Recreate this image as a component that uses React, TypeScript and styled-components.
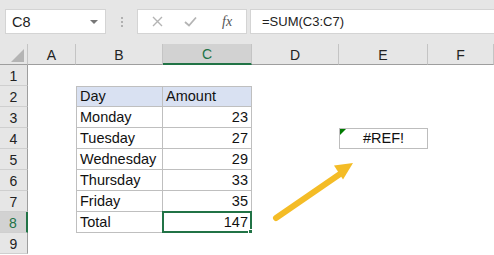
import styled, { createGlobalStyle } from "styled-components";

const GlobalStyle = createGlobalStyle`
  body {
    margin: 0;
    background: #fff;
    font-family: "Liberation Sans", Arial, sans-serif;
  }
`;

const Page = styled.div`
  position: relative;
  width: 494px;
  height: 255px;
  overflow: hidden;
  background: #fff;
`;

const FormulaBar = styled.div`
  display: flex;
  align-items: flex-start;
  height: 44px;
  box-sizing: border-box;
  padding: 9px 0 0 5px;
  background: #e6e6e6;
`;

const Box = styled.div`
  display: flex;
  align-items: center;
  height: 25px;
  box-sizing: border-box;
  background: #fff;
  border: 1px solid #d4d4d4;
  color: #222;
`;

const NameBox = styled(Box)`
  width: 101px;
  justify-content: space-between;
  padding: 0 7px 0 6px;
  font-size: 14.5px;
`;

const Caret = styled.span`
  width: 0;
  height: 0;
  border-left: 4px solid transparent;
  border-right: 4px solid transparent;
  border-top: 4px solid #777;
`;

const Dots = styled.div`
  display: flex;
  flex-direction: column;
  align-items: center;
  justify-content: center;
  gap: 2px;
  width: 31px;
  height: 25px;

  & span {
    width: 2px;
    height: 2px;
    background: #b0b0b0;
  }
`;

const IconBox = styled(Box)`
  width: 110px;
  padding-left: 14px;
  gap: 21px;
`;

const Fx = styled.span`
  font-family: "Liberation Serif", "Times New Roman", serif;
  font-style: italic;
  font-size: 14px;
  color: #555;
  margin-left: 4px;
`;

const FormulaInput = styled(Box)`
  flex: 1;
  margin-left: 3px;
  padding-left: 11px;
  font-size: 13px;
  border-right: none;
`;

const Sheet = styled.div`
  display: grid;
  grid-template-columns: 28px 48px 87px 89px 87px 89px 66px;
  grid-auto-rows: 21px;
  font-size: 14.5px;
`;

const ColHead = styled.div<{ $active?: boolean }>`
  display: flex;
  align-items: center;
  justify-content: center;
  box-sizing: border-box;
  background: ${(p) => (p.$active ? "#d2d2d2" : "#e6e6e6")};
  border-right: 1px solid #c4c4c4;
  border-bottom: ${(p) => (p.$active ? "2px solid #217346" : "1px solid #9e9e9e")};
  color: ${(p) => (p.$active ? "#217346" : "#222")};
  font-size: 14px;
  padding-top: 1px;
`;

const Corner = styled.div`
  position: relative;
  background: #e6e6e6;
  box-sizing: border-box;
  border-right: 1px solid #c4c4c4;
  border-bottom: 1px solid #9e9e9e;

  &::after {
    content: "";
    position: absolute;
    right: 3px;
    bottom: 2px;
    border-left: 13px solid transparent;
    border-bottom: 13px solid #b4b4b4;
  }
`;

const RowHead = styled.div<{ $active?: boolean }>`
  display: flex;
  align-items: center;
  justify-content: center;
  box-sizing: border-box;
  background: ${(p) => (p.$active ? "#d2d2d2" : "#e6e6e6")};
  border-bottom: 1px solid #cfcfcf;
  border-right: ${(p) => (p.$active ? "2px solid #217346" : "1px solid #9e9e9e")};
  color: ${(p) => (p.$active ? "#217346" : "#222")};
  font-size: 14px;
  padding-top: 2px;
`;

const Cell = styled.div<{
  $table?: boolean;
  $first?: boolean;
  $top?: boolean;
  $head?: boolean;
  $num?: boolean;
}>`
  position: relative;
  display: flex;
  align-items: flex-end;
  justify-content: ${(p) => (p.$num ? "flex-end" : "flex-start")};
  box-sizing: border-box;
  padding: 0 3px 1px;
  line-height: 18px;
  color: #111;
  white-space: nowrap;
  background: ${(p) => (p.$head ? "#d9e1f2" : "#fff")};
  ${(p) =>
    p.$table &&
    `
    border-right: 1px solid #bfbfbf;
    border-bottom: 1px solid #bfbfbf;
  `}
  ${(p) => p.$first && "border-left: 1px solid #bfbfbf;"}
  ${(p) => p.$top && "border-top: 1px solid #bfbfbf;"}
`;

const SelectedCell = styled(Cell)`
  &::before {
    content: "";
    position: absolute;
    inset: -1px -1px -1px -1px;
    border: 2px solid #217346;
  }

  &::after {
    content: "";
    position: absolute;
    right: -3px;
    bottom: -3px;
    width: 5px;
    height: 5px;
    background: #217346;
    box-shadow: 0 0 0 1px #fff;
  }
`;

const ErrorCell = styled(Cell)`
  justify-content: center;
  border: 1px solid #bdbdbd;

  &::before {
    content: "";
    position: absolute;
    left: 0;
    top: 0;
    border-top: 6px solid #007a00;
    border-right: 6px solid transparent;
  }
`;

const ArrowLayer = styled.svg`
  position: absolute;
  left: 0;
  top: 0;
  pointer-events: none;
`;

const cols = ["A", "B", "C", "D", "E", "F"];

const data: [string, string][] = [
  ["Monday", "23"],
  ["Tuesday", "27"],
  ["Wednesday", "29"],
  ["Thursday", "33"],
  ["Friday", "35"],
];

function Blank({ n }: { n: number }) {
  return (
    <>
      {Array.from({ length: n }, (_, i) => (
        <Cell key={i} />
      ))}
    </>
  );
}

export default function App() {
  return (
    <Page>
      <GlobalStyle />
      <FormulaBar>
        <NameBox>
          C8
          <Caret />
        </NameBox>
        <Dots>
          <span />
          <span />
          <span />
        </Dots>
        <IconBox>
          <svg width="11" height="11" viewBox="0 0 11 11">
            <path d="M1 1 L10 10 M10 1 L1 10" stroke="#b4b4b4" strokeWidth="1.4" />
          </svg>
          <svg width="13" height="11" viewBox="0 0 13 11">
            <path d="M1 6 L5 9.5 L12 1.5" stroke="#b4b4b4" strokeWidth="1.8" fill="none" />
          </svg>
          <Fx>fx</Fx>
        </IconBox>
        <FormulaInput>=SUM(C3:C7)</FormulaInput>
      </FormulaBar>

      <Sheet>
        <Corner />
        {cols.map((c) => (
          <ColHead key={c} $active={c === "C"}>
            {c}
          </ColHead>
        ))}

        <RowHead>1</RowHead>
        <Blank n={6} />

        <RowHead>2</RowHead>
        <Cell />
        <Cell $table $first $top $head>
          Day
        </Cell>
        <Cell $table $top $head>
          Amount
        </Cell>
        <Blank n={3} />

        {data.map(([day, amt], i) => (
          <Row key={day} n={i + 3} day={day} amt={amt} />
        ))}

        <RowHead $active>8</RowHead>
        <Cell />
        <Cell $table $first>
          Total
        </Cell>
        <SelectedCell $table $num>
          147
        </SelectedCell>
        <Blank n={3} />

        <RowHead>9</RowHead>
        <Blank n={6} />
      </Sheet>

      <ArrowLayer width="494" height="255" viewBox="0 0 494 255">
        <line
          x1="276"
          y1="218"
          x2="340"
          y2="174"
          stroke="#f4bc26"
          strokeWidth="6"
          strokeLinecap="round"
        />
        <polygon points="353,163 334,165.5 343,179.5" fill="#f4bc26" />
      </ArrowLayer>
    </Page>
  );
}

function Row({ n, day, amt }: { n: number; day: string; amt: string }) {
  return (
    <>
      <RowHead>{n}</RowHead>
      <Cell />
      <Cell $table $first>
        {day}
      </Cell>
      <Cell $table $num>
        {amt}
      </Cell>
      <Cell />
      {n === 4 ? <ErrorCell>#REF!</ErrorCell> : <Cell />}
      <Cell />
    </>
  );
}
